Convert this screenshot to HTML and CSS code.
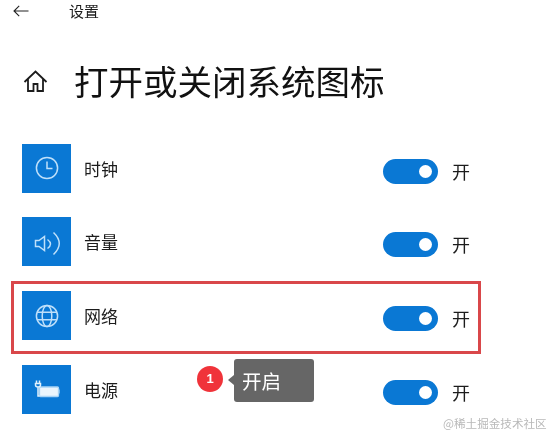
FILE: index.html
```html
<!DOCTYPE html>
<html lang="zh-CN">
<head>
<meta charset="utf-8">
<title>设置</title>
<link rel="stylesheet" href="styles.css">
</head>
<body>
<div class="page">
  <header class="topbar">
    <svg class="back" width="17" height="12" viewBox="0 0 17 12"><path d="M15.5 6H1M6.2 .8 1 6l5.2 5.2" fill="none" stroke="#222" stroke-width="1.1"/></svg>
    <span class="topbar-title">设置</span>
  </header>
  <div class="heading">
    <svg class="home" width="25" height="24" viewBox="0 0 25 24"><path d="M1.500 13 12.500 2.500 23.500 13M5 10V22H10.500V15H14.500V22H20V10" fill="none" stroke="#1c1c1c" stroke-width="1.800"/></svg>
    <h1 class="title">打开或关闭系统图标</h1>
  </div>
  <ul class="list">
    <li class="row">
      <span class="tile"><svg width="24" height="24" viewBox="0 0 24 24"><circle cx="12" cy="12" r="10.600" fill="none" stroke="#bfe0fa" stroke-width="1.500"/><path d="M12 5.500V12.600H17.500" fill="none" stroke="#bfe0fa" stroke-width="1.500"/></svg></span>
      <span class="label">时钟</span>
      <span class="toggle"><span class="knob"></span></span>
      <span class="state">开</span>
    </li>
    <li class="row">
      <span class="tile"><svg width="28" height="28" viewBox="0 0 28 28"><path d="M2.500 12.500H6L11.500 8.500V22.500L6 18.500H2.500Z" fill="none" stroke="#bfe0fa" stroke-width="1.500"/><path d="M14.500 11.500Q20.500 16 14.500 20.500M20.500 4.500Q32 15.500 20.500 26.500" fill="none" stroke="#bfe0fa" stroke-width="1.500"/></svg></span>
      <span class="label">音量</span>
      <span class="toggle"><span class="knob"></span></span>
      <span class="state">开</span>
    </li>
    <li class="row">
      <span class="tile"><svg width="24" height="24" viewBox="0 0 24 24"><g fill="none" stroke="#bfe0fa" stroke-width="1.500"><circle cx="12" cy="12" r="10.600"/><ellipse cx="12" cy="12" rx="4.800" ry="10.600"/><path d="M2 8.300H22M2 15.700H22"/></g></svg></span>
      <span class="label">网络</span>
      <span class="toggle"><span class="knob"></span></span>
      <span class="state">开</span>
    </li>
    <li class="row">
      <span class="tile"><svg width="26" height="18" viewBox="0 0 26 18"><rect x="5.500" y="7" width="19" height="9.500" rx="1" fill="#eaf5fd" stroke="#a9d4f5" stroke-width="1.300"/><path d="M25 9.500V13.500" stroke="#a9d4f5" stroke-width="1.300"/><path d="M2.500 .5V3.500M5.500 .5V3.500M1.500 3.500H6.500V5Q6.500 7 4 7Q1.500 7 1.500 5ZM4 7V16H5.500" fill="none" stroke="#e2f1fc" stroke-width="1.500"/></svg></span>
      <span class="label">电源</span>
      <span class="toggle"><span class="knob"></span></span>
      <span class="state">开</span>
    </li>
  </ul>
  <div class="highlight"></div>
  <div class="badge">1</div>
  <div class="tip">开启</div>
  <div class="mark">@稀土掘金技术社区</div>
</div>
</body>
</html>
```
FILE: styles.css
```css
* { box-sizing: border-box; }
html, body { margin: 0; padding: 0; background: #fff; }
body { font-family: "Noto Sans CJK SC", "Liberation Sans", sans-serif; color: #1c1c1c; }
.page { position: relative; width: 550px; height: 433px; overflow: hidden; filter: blur(.3px); }
.topbar { display: flex; align-items: center; height: 22px; padding-left: 13px; }
.back { margin-right: 39px; }
.topbar-title { font-size: 15px; line-height: 22px; }
.heading { display: flex; align-items: center; height: 52px; margin-top: 32px; padding-left: 23px; }
.home { margin-right: 26px; margin-top: 1px; }
.title { margin: 0; font-size: 34.500px; font-weight: 400; line-height: 52px; color: #111; }
.list { list-style: none; margin: 37.700px 0 0; padding: 0 0 0 22px; }
.row { display: flex; align-items: center; height: 49px; margin-bottom: 24.670px; }
.tile { display: flex; align-items: center; justify-content: center; flex: none; width: 49px; height: 49px; background: #0a78d4; }
.label { width: 299px; margin-left: 13px; font-size: 17px; line-height: 49px; }
.toggle { display: flex; align-items: center; justify-content: flex-end; width: 55px; height: 25px; margin-top: 6px; padding-right: 6px; border-radius: 13px; background: #0a78d4; }
.knob { width: 13px; height: 13px; border-radius: 50%; background: #fff; }
.state { margin-left: 14px; margin-top: 6px; font-size: 18px; line-height: 25px; }
.highlight { position: absolute; left: 11px; top: 281px; width: 470px; height: 73px; border: 3px solid #d9474a; }
.badge { position: absolute; left: 197px; top: 366px; width: 26px; height: 26px; border-radius: 50%; background: #f0333a; color: #fff; font: 700 13px/26px "Liberation Sans", sans-serif; text-align: center; }
.tip { position: absolute; left: 234px; top: 359px; width: 80px; height: 43px; padding-left: 8px; border-radius: 3px; background: #666; color: #fff; font-size: 19.500px; line-height: 43px; }
.tip::before { content: ""; position: absolute; left: -6px; top: 16px; border: 5px solid transparent; border-left-width: 0; border-right: 6px solid #666; }
.mark { position: absolute; left: 443px; top: 414px; font-size: 11.600px; line-height: 18px; color: #b9b9b9; white-space: nowrap; }
```
